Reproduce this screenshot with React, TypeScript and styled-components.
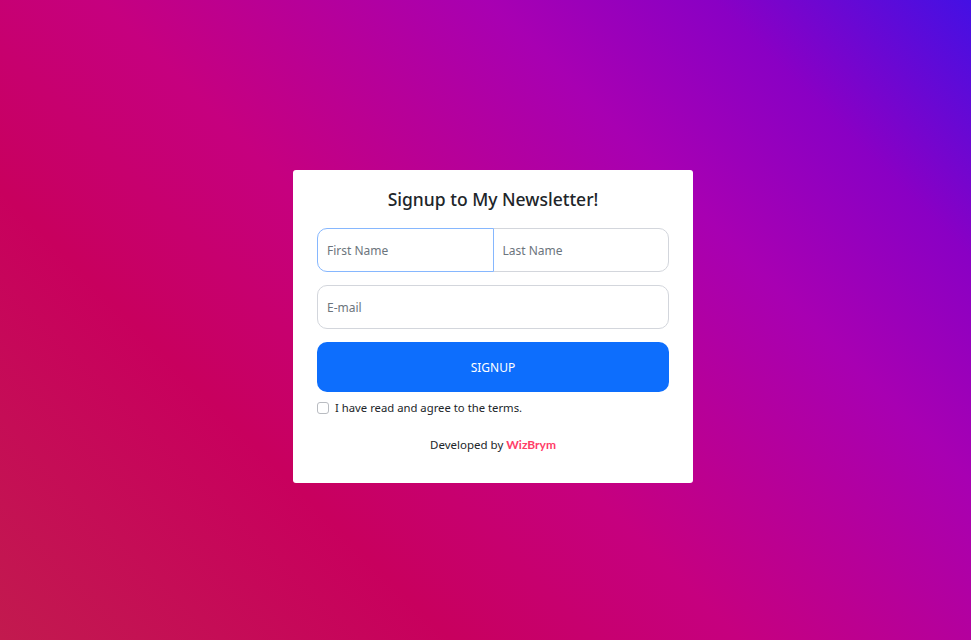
import React from "react";
import styled, { createGlobalStyle } from "styled-components";

const GlobalStyle = createGlobalStyle`
  * { box-sizing: border-box; }
  html, body { margin: 0; padding: 0; height: 100%; }
  body {
    font-family: "Noto Sans", "Open Sans", sans-serif;
    color: #212529;
  }
  #root { height: 100%; }
`;

const Page = styled.div`
  width: 100%;
  height: 640px;
  display: flex;
  align-items: center;
  justify-content: center;
  background: linear-gradient(
    45deg,
    #c21a4e 0%,
    #c8005e 28%,
    #c6007f 46%,
    #a800b2 70%,
    #8a00c4 84%,
    #4410e4 100%
  );
`;

const Card = styled.form`
  width: 400px;
  height: 313px;
  background: #ffffff;
  border-radius: 3px;
  padding: 17px 24px 0;
  display: flex;
  flex-direction: column;
  margin: 12px 0 0 15px;
`;

const Title = styled.h1`
  margin: 0 0 17px;
  font-size: 17.5px;
  font-weight: 500;
  text-align: center;
  color: #212529;
  line-height: 24px;
`;

const Group = styled.div`
  display: flex;
  height: 44px;
  margin-bottom: 13px;
`;

const Field = styled.input<{ $pos?: "left" | "right" | "full"; $focused?: boolean }>`
  flex: 1;
  min-width: 0;
  height: 44px;
  padding: 2px 9px 0;
  font-family: inherit;
  font-size: 12px;
  color: #212529;
  background: #fff;
  border: 1px solid ${(p) => (p.$focused ? "#86b7fe" : "#d3d6dc")};
  border-radius: ${(p) =>
    p.$pos === "left" ? "10px 0 0 10px" : p.$pos === "right" ? "0 10px 10px 0" : "10px"};
  margin-left: ${(p) => (p.$pos === "right" ? "-1px" : "0")};
  position: relative;
  z-index: ${(p) => (p.$focused ? 1 : 0)};
  outline: none;
  caret-color: #000;
  &::placeholder { color: #6c757d; }
`;

const Button = styled.button`
  height: 50px;
  padding: 2px 0 0;
  border: none;
  border-radius: 10px;
  background: #0d6efd;
  color: #fff;
  font-family: inherit;
  font-size: 12px;
  text-transform: uppercase;
  cursor: pointer;
  margin-bottom: 9px;
`;

const CheckRow = styled.label`
  display: flex;
  align-items: center;
  gap: 6px;
  font-size: 11.3px;
  color: #212529;
  height: 14px;
`;

const Box = styled.input`
  appearance: none;
  width: 12px;
  height: 12px;
  margin: 0;
  border: 1px solid #b9bcc1;
  border-radius: 3px;
  background: #fff;
`;

const Footer = styled.p`
  margin: 22px 0 0;
  text-align: center;
  font-size: 11.5px;
  color: #212529;
`;

const Brand = styled.span`
  color: #ff3d68;
  font-weight: 700;
  font-family: "Lato", "Noto Sans", sans-serif;
  font-size: 12px;
`;

export default function App() {
  return (
    <>
      <GlobalStyle />
      <Page>
        <Card onSubmit={(e) => e.preventDefault()}>
          <Title>Signup to My Newsletter!</Title>
          <Group>
            <Field $pos="left" $focused placeholder="First Name" autoFocus />
            <Field $pos="right" placeholder="Last Name" />
          </Group>
          <Group>
            <Field $pos="full" type="email" placeholder="E-mail" />
          </Group>
          <Button type="submit">Signup</Button>
          <CheckRow>
            <Box type="checkbox" />
            I have read and agree to the terms.
          </CheckRow>
          <Footer>
            Developed by <Brand>WizBrym</Brand>
          </Footer>
        </Card>
      </Page>
    </>
  );
}
